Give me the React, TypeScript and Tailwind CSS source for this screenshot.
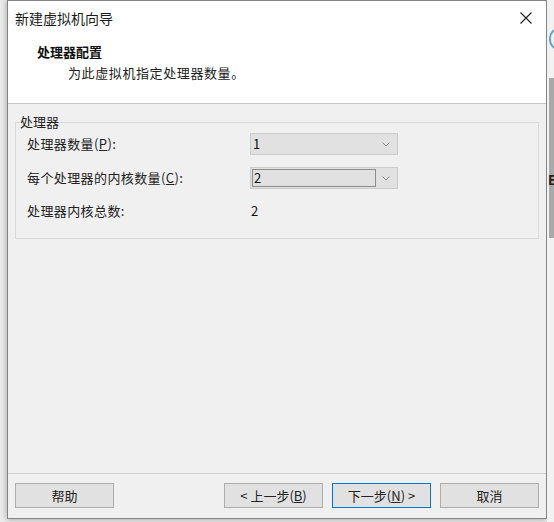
import React from "react";

const font = { fontFamily: '"Noto Sans CJK SC", "Noto Sans", sans-serif' };

function Chevron() {
  return (
    <svg width="8" height="5" viewBox="0 0 8 5" className="block">
      <path d="M0.5 0.5 L4 4 L7.5 0.5" fill="none" stroke="#8a8a8a" strokeWidth="1" />
    </svg>
  );
}

function Btn({ children, primary }: { children: React.ReactNode; primary?: boolean }) {
  return (
    <div
      className={`w-[99px] h-[25px] flex items-center justify-center text-[13px] text-[#222] bg-[#e1e1e1] border ${
        primary ? "border-[#0078d7]" : "border-[#adadad]"
      }`}
    >
      {children}
    </div>
  );
}

export default function App() {
  return (
    <div className="w-[554px] h-[522px] bg-[#ebebeb] flex overflow-hidden" style={font}>
      <div className="w-[7px] shrink-0" />
      <div className="w-[540px] h-[519px] shrink-0 border border-[#858585] bg-[#f0f0f0] flex flex-col shadow-[0_0_6px_rgba(0,0,0,0.35)]">
        {/* title + header */}
        <div className="bg-white h-[102px] shrink-0 flex flex-col">
          <div className="h-[34px] flex items-center justify-between pl-[7px] pr-[14px]">
            <span className="text-[14px] text-[#1a1a1a]">新建虚拟机向导</span>
            <svg width="12" height="12" viewBox="0 0 12 12">
              <path d="M0.5 0.5 L11.5 11.5 M11.5 0.5 L0.5 11.5" stroke="#222" strokeWidth="1.2" />
            </svg>
          </div>
          <div className="pl-[29px] pt-[9px] text-[13px] font-bold text-[#111] leading-[16px]">处理器配置</div>
          <div className="pl-[60px] pt-[5px] text-[13px] text-[#222] leading-[16px] tracking-[0.6px]">
            为此虚拟机指定处理器数量。
          </div>
        </div>
        <div className="h-px bg-[#c8c8c8] shrink-0" />
        {/* body */}
        <div className="flex-1 px-[7px] pt-[18px]">
          <div className="relative border border-[#dadada] h-[117px] px-[11px] pt-[10px]">
            <span className="absolute left-[4px] top-[-9px] bg-[#f0f0f0] text-[13px] leading-[16px] text-[#222]">
              处理器
            </span>
            <div className="flex items-center h-[22px]">
              <span className="w-[223px] text-[13px] text-[#222] tracking-[0.4px]">
                处理器数量(<u>P</u>):
              </span>
              <div className="w-[148px] h-[22px] bg-[#e1e1e1] border border-[#cccccc] flex items-center justify-between pl-[2px] pr-[7px]">
                <span className="text-[13px] text-[#111]">1</span>
                <Chevron />
              </div>
            </div>
            <div className="flex items-center h-[22px] mt-[12px]">
              <span className="w-[223px] text-[13px] text-[#222] tracking-[0.4px]">
                每个处理器的内核数量(<u>C</u>):
              </span>
              <div className="w-[148px] h-[22px] bg-[#e1e1e1] border border-[#cccccc] flex items-center justify-between p-[1px] pr-[7px]">
                <div className="w-[124px] h-[18px] border border-[#8c8c8c] flex items-center pl-[1px]">
                  <span className="text-[13px] text-[#111]">2</span>
                </div>
                <Chevron />
              </div>
            </div>
            <div className="flex items-center h-[22px] mt-[11px]">
              <span className="w-[224px] text-[13px] text-[#222] tracking-[0.4px]">处理器内核总数:</span>
              <span className="text-[13px] text-[#111]">2</span>
            </div>
          </div>
        </div>
        {/* footer */}
        <div className="h-px bg-[#d0d0d0] shrink-0" />
        <div className="h-[44px] shrink-0 flex items-start pt-[9px] px-[7px]">
          <Btn>帮助</Btn>
          <div className="flex-1" />
          <div className="flex gap-[9px]">
            <Btn>&lt; 上一步(<u>B</u>)</Btn>
            <Btn primary>下一步(<u>N</u>) &gt;</Btn>
            <Btn>取消</Btn>
          </div>
        </div>
      </div>
      <div className="flex-1 relative bg-[#f2f2f2]">
        <div className="absolute left-[2px] top-[28px] w-[20px] h-[22px] rounded-full border-2 border-[#5ba8c8]" />
        <div className="absolute left-[2px] top-[78px] w-[10px] h-[160px] bg-[#a9a9a9]" />
        <span className="absolute left-[1px] top-[172px] text-[13px] font-bold text-[#222] leading-[16px]">E</span>
      </div>
    </div>
  );
}
